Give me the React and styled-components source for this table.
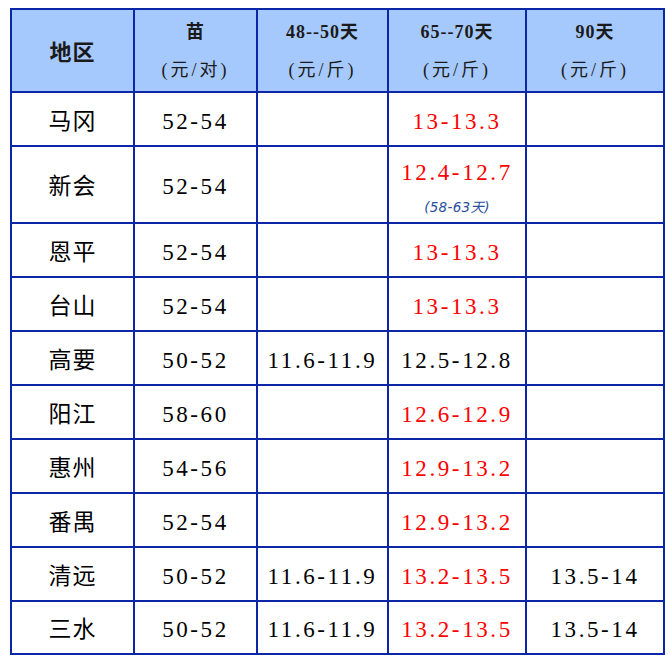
import React from "react";
import styled, { createGlobalStyle } from "styled-components";

const Global = createGlobalStyle`
  html, body { margin: 0; padding: 0; background: #ffffff; }
  body { font-family: "Liberation Serif", "Noto Sans CJK SC", serif; }
`;

const Page = styled.div`
  padding: 8px 0 0 10px;
`;

const Grid = styled.div`
  display: grid;
  grid-template-columns: 121px 121px 129px 136px 136px;
  grid-template-rows: 81px 52px 75px repeat(7, 52px) 51px;
  gap: 2px;
  padding: 2px;
  width: max-content;
  background: #0b27a8;
`;

const HeadCell = styled.div`
  background: #a6c9fd;
  display: flex;
  flex-direction: column;
  align-items: center;
  justify-content: center;
  gap: 20px;
  padding-top: ${(p) => (p.$single ? "4px" : "0")};
  font-family: "Liberation Serif", "Noto Sans CJK SC", serif;
  font-size: ${(p) => (p.$single ? "22px" : "18px")};
  font-weight: 700;
  color: #1a1a1a;
  letter-spacing: 1px;
  line-height: 1;
`;

const Unit = styled.span`
  font-weight: 400;
  letter-spacing: 3px;
`;

const Cell = styled.div`
  background: #ffffff;
  display: flex;
  flex-direction: column;
  align-items: center;
  justify-content: center;
  padding-top: ${(p) => (p.$tall ? "6px" : "4px")};
  box-sizing: border-box;
  font-family: "Liberation Serif", "Noto Sans CJK SC", serif;
  font-size: 23px;
  line-height: 1;
  letter-spacing: ${(p) => (p.$label ? "1px" : "2.6px")};
  color: ${(p) => (p.$red ? "#ff0000" : "#000000")};
`;

const Note = styled.span`
  margin-top: 17px;
  font-family: "DejaVu Sans", "Noto Sans CJK SC", sans-serif;
  font-style: italic;
  font-size: 13.5px;
  letter-spacing: 0.3px;
  color: #2a4fa0;
`;

const headers = [
  { top: "地区", single: true },
  { top: "苗", unit: "(元/对)" },
  { top: "48--50天", unit: "(元/斤)" },
  { top: "65--70天", unit: "(元/斤)" },
  { top: "90天", unit: "(元/斤)" },
];

const rows = [
  { name: "马冈", seed: "52-54", d50: "", d70: "13-13.3", red: true, d90: "" },
  { name: "新会", seed: "52-54", d50: "", d70: "12.4-12.7", red: true, note: "(58-63天)", d90: "" },
  { name: "恩平", seed: "52-54", d50: "", d70: "13-13.3", red: true, d90: "" },
  { name: "台山", seed: "52-54", d50: "", d70: "13-13.3", red: true, d90: "" },
  { name: "高要", seed: "50-52", d50: "11.6-11.9", d70: "12.5-12.8", red: false, d90: "" },
  { name: "阳江", seed: "58-60", d50: "", d70: "12.6-12.9", red: true, d90: "" },
  { name: "惠州", seed: "54-56", d50: "", d70: "12.9-13.2", red: true, d90: "" },
  { name: "番禺", seed: "52-54", d50: "", d70: "12.9-13.2", red: true, d90: "" },
  { name: "清远", seed: "50-52", d50: "11.6-11.9", d70: "13.2-13.5", red: true, d90: "13.5-14" },
  { name: "三水", seed: "50-52", d50: "11.6-11.9", d70: "13.2-13.5", red: true, d90: "13.5-14" },
];

export default function App() {
  return (
    <>
      <Global />
      <Page>
        <Grid>
          {headers.map((h) => (
            <HeadCell key={h.top} $single={h.single}>
              <span>{h.top}</span>
              {h.unit && <Unit>{h.unit}</Unit>}
            </HeadCell>
          ))}
          {rows.map((r) => (
            <React.Fragment key={r.name}>
              <Cell $label>{r.name}</Cell>
              <Cell>{r.seed}</Cell>
              <Cell>{r.d50}</Cell>
              <Cell $red={r.red} $tall={!!r.note}>
                <span>{r.d70}</span>
                {r.note && <Note>{r.note}</Note>}
              </Cell>
              <Cell>{r.d90}</Cell>
            </React.Fragment>
          ))}
        </Grid>
      </Page>
    </>
  );
}
